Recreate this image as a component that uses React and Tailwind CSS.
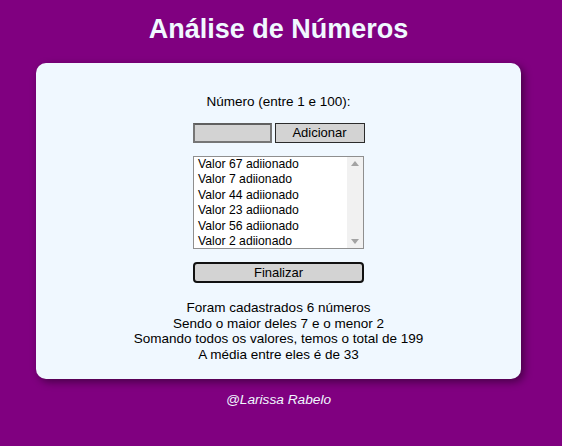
import React from "react";

const items = [67, 7, 44, 23, 56, 2];

export default function App() {
  return (
    <div className="w-[562px] h-[446px] bg-[#800080] flex flex-col items-center overflow-hidden pr-[5px]" style={{ fontFamily: '"Liberation Sans", Arial, sans-serif' }}>
      <h1 className="mt-[12px] h-[34px] leading-[34px] text-[27px] font-bold text-[#f0f8ff]">Análise de Números</h1>
      <div className="mt-[17px] w-[485px] h-[316px] bg-[#f0f8ff] rounded-[10px] shadow-[3px_3px_8px_rgba(0,0,0,0.45)] flex flex-col items-center text-black">
        <p className="mt-[31px] text-[13.5px] leading-[16px]">Número (entre 1 e 100):</p>
        <div className="mt-[13px] flex gap-[3px]">
          <div className="w-[79px] h-[20px] bg-[#d3d3d3] border-2 border-[#767676] border-t-[#5f5f5f]"></div>
          <div className="w-[90px] h-[20px] bg-[#d3d3d3] border border-[#2b2b2b] text-[13px] leading-[18px] text-center">Adicionar</div>
        </div>
        <div className="mt-[13px] w-[171px] h-[93px] bg-white border border-[#8f8f8f] flex">
          <div className="flex-1 pl-[4px] pt-[0px] text-[12.2px] leading-[15.4px]">
            {items.map((v) => (
              <div key={v}>Valor {v} adiionado</div>
            ))}
          </div>
          <div className="w-[16px] bg-[#f1f1f1] flex flex-col justify-between items-center py-[4px]">
            <svg width="8" height="5" viewBox="0 0 8 5"><path d="M0 5 L4 0 L8 5 Z" fill="#a3a3a3" /></svg>
            <svg width="8" height="5" viewBox="0 0 8 5"><path d="M0 0 L4 5 L8 0 Z" fill="#a3a3a3" /></svg>
          </div>
        </div>
        <div className="mt-[13px] w-[171px] h-[21px] bg-[#d3d3d3] border-2 border-[#111] rounded-[4px] text-[13px] leading-[17px] text-center">Finalizar</div>
        <div className="mt-[17px] text-[13.5px] leading-[15.5px] text-center">
          <p>Foram cadastrados 6 números</p>
          <p>Sendo o maior deles 7 e o menor 2</p>
          <p>Somando todos os valores, temos o total de 199</p>
          <p>A média entre eles é de 33</p>
        </div>
      </div>
      <p className="mt-[11px] text-[13.7px] italic text-[#f0f8ff]">@Larissa Rabelo</p>
    </div>
  );
}
